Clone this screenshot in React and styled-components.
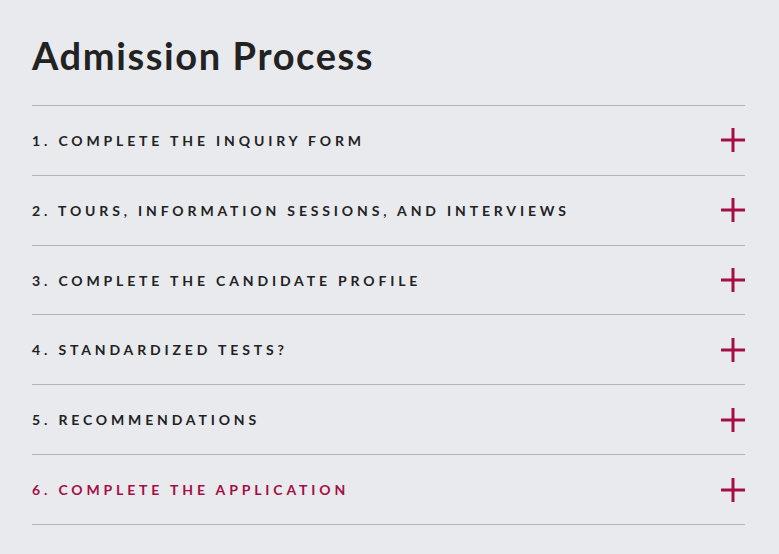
import styled, { createGlobalStyle } from "styled-components";

const GlobalStyle = createGlobalStyle`
  html, body {
    margin: 0;
    padding: 0;
    background: #e9eaee;
  }
  body {
    font-family: Lato, "Open Sans", sans-serif;
  }
`;

const items = [
  "1. Complete the Inquiry Form",
  "2. Tours, Information Sessions, and Interviews",
  "3. Complete the Candidate Profile",
  "4. Standardized Tests?",
  "5. Recommendations",
  "6. Complete the Application",
];

function Plus() {
  return (
    <svg width="24" height="24" viewBox="0 0 24 24">
      <rect x="10.5" y="0" width="3" height="24" fill="#a50e45" />
      <rect x="0" y="10.5" width="24" height="3" fill="#a50e45" />
    </svg>
  );
}

export default function App() {
  return (
    <Wrapper>
      <GlobalStyle />
      <Title>Admission Process</Title>
      <List>
        {items.map((text, i) => (
          <Row key={i}>
            <Label $active={i === items.length - 1}>{text}</Label>
            <Toggle aria-label="expand">
              <Plus />
            </Toggle>
          </Row>
        ))}
      </List>
    </Wrapper>
  );
}

const Wrapper = styled.div`
  width: 713px;
  padding: 31px 34px 30px 32px;
`;

const Title = styled.h1`
  margin: 0 0 26px;
  font-size: 38px;
  line-height: 48px;
  font-weight: 700;
  color: #222222;
  letter-spacing: 1.6px;
`;

const List = styled.div`
  border-top: 1px solid #b4b4b7;
`;

const Row = styled.div`
  display: flex;
  align-items: center;
  justify-content: space-between;
  height: 68.83px;
  border-bottom: 1px solid #b4b4b7;
`;

const Label = styled.span`
  font-size: 14px;
  font-weight: 700;
  text-transform: uppercase;
  letter-spacing: 3.85px;
  color: ${(p) => (p.$active ? "#a50e45" : "#222222")};
`;

const Toggle = styled.button`
  display: flex;
  padding: 0;
  border: none;
  background: transparent;
  cursor: pointer;
`;
